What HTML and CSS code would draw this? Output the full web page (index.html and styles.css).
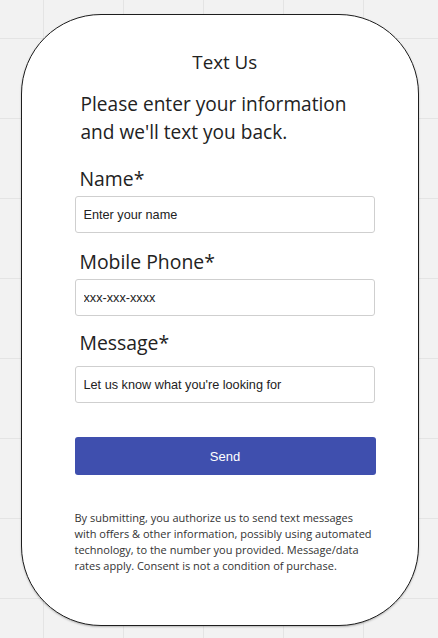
FILE: index.html
```html
<!DOCTYPE html>
<html lang="en">
<head>
<meta charset="utf-8">
<title>Text Us</title>
<link rel="stylesheet" href="styles.css">
</head>
<body>
<div class="canvas">
  <form class="card">
    <h1 class="title">Text Us</h1>
    <p class="intro">Please enter your information<br>and we'll text you back.</p>
    <div class="field field-name">
      <label class="label" for="name">Name*</label>
      <input class="input" id="name" type="text" placeholder="Enter your name">
    </div>
    <div class="field field-phone">
      <label class="label" for="phone">Mobile Phone*</label>
      <input class="input" id="phone" type="text" placeholder="xxx-xxx-xxxx">
    </div>
    <div class="field field-msg">
      <label class="label" for="msg">Message*</label>
      <input class="input" id="msg" type="text" placeholder="Let us know what you're looking for">
    </div>
    <button class="send" type="button">Send</button>
    <p class="legal">By submitting, you authorize us to send text messages with offers &amp; other information, possibly using automated technology, to the number you provided. Message/data rates apply. Consent is not a condition of purchase.</p>
  </form>
</div>
</body>
</html>
```

FILE: styles.css
```css
* { box-sizing: border-box; }
html, body { margin: 0; padding: 0; }
body {
  width: 438px;
  height: 638px;
  overflow: hidden;
  background-color: #f2f2f2;
  background-image:
    linear-gradient(to right, #e4e4e4 1px, transparent 1px),
    linear-gradient(to bottom, #e4e4e4 1px, transparent 1px);
  background-size: 80px 80px;
  background-position: 43px 38px;
  font-family: "Open Sans", "Noto Sans", sans-serif;
  color: #222;
}
.canvas {
  padding: 14px 19px 0 21px;
}
.card {
  width: 398px;
  height: 612px;
  background: #fff;
  border: 1.5px solid #1e1e1e;
  border-radius: 80px;
  box-shadow: 0 1px 2px rgba(0,0,0,0.25);
  padding: 35px 43px 0 52.5px;
  display: flex;
  flex-direction: column;
}
.title {
  margin: 0;
  font-size: 18.8px;
  font-weight: 400;
  line-height: 24px;
  text-align: center;
}
.intro {
  margin: 16px 0 0 6px;
  font-size: 19.1px;
  line-height: 28px;
}
.field {
  display: flex;
  flex-direction: column;
  gap: 4px;
}
.field-name { margin-top: 20px; }
.field-phone { margin-top: 16px; }
.field-msg { margin-top: 14px; }
.field-msg .input { margin-top: 6px; }
.label {
  font-size: 19.4px;
  line-height: 26px;
  padding-left: 5px;
}
.input {
  height: 37px;
  width: 300px;
  border: 1px solid #cfcfcf;
  border-radius: 3px;
  padding: 0 8px;
  font-family: "Liberation Sans", Arial, sans-serif;
  font-size: 12.7px;
  color: #222;
  background: #fff;
}
.input::placeholder { color: #222; opacity: 1; }
.send {
  margin-top: 34px;
  width: 301px;
  height: 38px;
  border: none;
  border-radius: 3px;
  background: #3f4fae;
  color: #fff;
  font-family: "Liberation Sans", Arial, sans-serif;
  font-size: 13px;
  padding: 0;
}
.legal {
  margin: 35px 0 0 0;
  font-size: 11px;
  line-height: 16px;
  color: #333;
}
```
